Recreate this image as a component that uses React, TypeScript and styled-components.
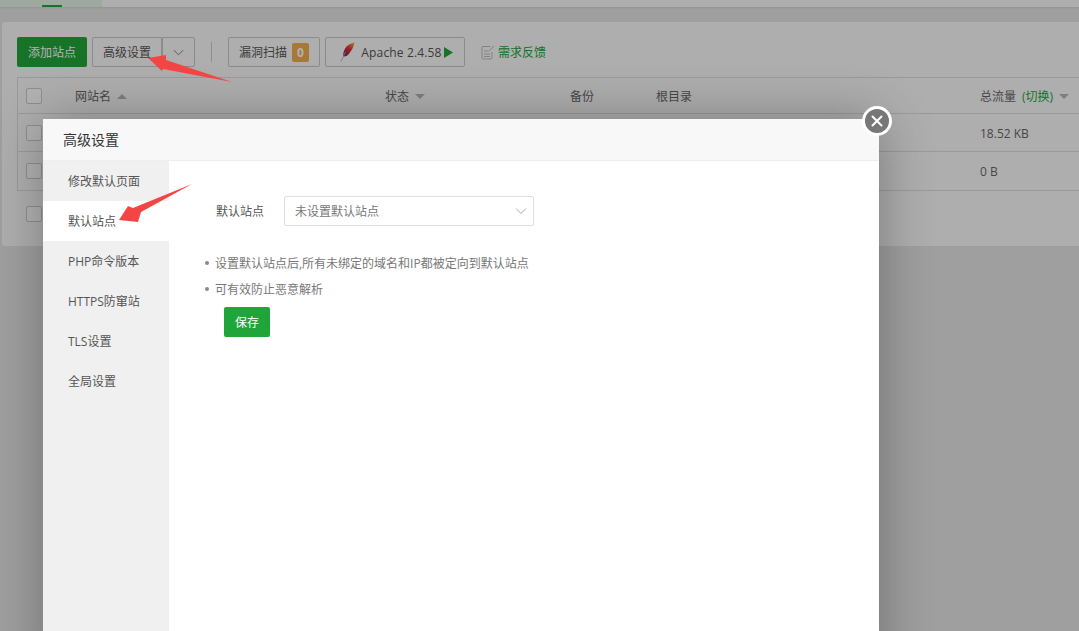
import React from "react";
import styled, { createGlobalStyle } from "styled-components";

const Global = createGlobalStyle`
  html, body { margin: 0; padding: 0; background: #e4e4e4; }
  body { font-family: "Open Sans", "Noto Sans CJK SC", sans-serif; font-size: 12px; color: #666; }
  * { box-sizing: border-box; }
`;

const Viewport = styled.div`
  position: relative;
  width: 1079px;
  height: 631px;
  overflow: hidden;
  background: #e4e4e4;
`;
const TopCard = styled.div`
  height: 7px;
  background: #fafafa;
  box-shadow: 0 1px 2px rgba(0, 0, 0, 0.08);
  margin-bottom: 15px;
`;
const TopTab = styled.div`
  display: flow-root;
  width: 102px;
  height: 7px;
  background: #e3f3e6;
  padding-left: 42px;
`;
const TopMark = styled.div`
  width: 20px;
  height: 2px;
  margin-top: 5px;
  background: #20a53a;
`;
const Panel = styled.section`
  margin-left: 2px;
  height: 224px;
  background: #fafafa;
  border-radius: 4px 0 0 4px;
  padding: 15px 0 0 15px;
`;
const Toolbar = styled.div`
  display: flex;
  align-items: center;
  height: 30px;
`;
const PrimaryBtn = styled.div`
  width: 70px;
  height: 30px;
  display: flex;
  align-items: center;
  justify-content: center;
  background: #20a53a;
  color: #fff;
  border-radius: 2px;
`;
const OutlineBtn = styled.div<{ $w: number; $ml?: number; $radius?: string; $pl?: number }>`
  width: ${(p) => p.$w}px;
  margin-left: ${(p) => p.$ml ?? 0}px;
  height: 30px;
  padding-left: ${(p) => p.$pl ?? 0}px;
  display: flex;
  align-items: center;
  justify-content: center;
  gap: 5px;
  background: transparent;
  color: #555;
  border: 1px solid #c8c8c8;
  border-radius: ${(p) => p.$radius ?? "2px"};
`;
const ApacheLabel = styled.span`
  letter-spacing: 0.15px;
  margin-left: 1px;
`;
const Divider = styled.div`
  width: 1px;
  height: 20px;
  margin: 0 16px;
  background: #ccc;
`;
const Badge = styled.span`
  width: 17px;
  height: 19px;
  display: flex;
  align-items: center;
  justify-content: center;
  background: #f0ad4e;
  color: #fff;
  font-size: 12px;
  font-weight: 700;
  border-radius: 2px;
`;
const Feedback = styled.div`
  margin-left: 16px;
  display: flex;
  align-items: center;
  gap: 3px;
  color: #20a53a;
`;
const Table = styled.div`
  margin-top: 10px;
  border: 1px solid #ddd;
  border-right: 0;
`;
const Row = styled.div<{ $h: number; $bg?: string; $line?: boolean; $pt?: number }>`
  display: grid;
  grid-template-columns: 49px 310px 185px 86px 324px 1fr;
  align-items: center;
  height: ${(p) => p.$h}px;
  padding: ${(p) => p.$pt ?? 0}px 0 0 8px;
  background: ${(p) => p.$bg ?? "transparent"};
  border-bottom: ${(p) => (p.$line ? "1px solid #ddd" : "0")};
  color: #666;
`;
const Head = styled.div`
  display: flex;
  align-items: center;
  gap: 6px;
  color: #666;
`;
const Caret = styled.span<{ $up?: boolean }>`
  width: 0;
  height: 0;
  border-left: 5px solid transparent;
  border-right: 5px solid transparent;
  ${(p) => (p.$up ? "border-bottom: 5px solid #b5b5b5;" : "border-top: 5px solid #b5b5b5;")}
`;
const Check = styled.div`
  width: 16px;
  height: 16px;
  border: 1px solid #ccc;
  border-radius: 2px;
  background: #fff;
`;
const Green = styled.span`
  color: #20a53a;
`;
const Footer = styled.div`
  padding: 15px 0 0 9px;
`;
const Shade = styled.div`
  position: absolute;
  inset: 0;
  background: rgba(0, 0, 0, 0.3);
`;
const Dialog = styled.div`
  position: absolute;
  left: 43px;
  top: 119px;
  width: 836px;
  height: 560px;
  background: #fff;
  box-shadow: 1px 1px 50px rgba(0, 0, 0, 0.3);
`;
const DialogTitle = styled.div`
  height: 42px;
  padding: 0 0 2px 20px;
  display: flex;
  align-items: center;
  background: #f8f8f8;
  border-bottom: 1px solid #eee;
  color: #333;
  font-size: 14px;
`;
const DialogBody = styled.div`
  display: flex;
  height: 518px;
`;
const Side = styled.nav`
  width: 126px;
  background: #f0f0f0;
`;
const SideItem = styled.div<{ $active?: boolean }>`
  height: 40px;
  padding-left: 25px;
  display: flex;
  align-items: center;
  color: #555;
  background: ${(p) => (p.$active ? "#fff" : "transparent")};
`;
const Content = styled.div`
  flex: 1;
  padding: 35px 0 0 35px;
`;
const FormRow = styled.div`
  display: flex;
  align-items: center;
  padding-left: 12px;
`;
const FormLabel = styled.label`
  width: 68px;
  color: #555;
`;
const SelectBox = styled.div`
  width: 250px;
  height: 30px;
  padding: 0 6px 0 10px;
  display: flex;
  align-items: center;
  justify-content: space-between;
  border: 1px solid #dcdfe6;
  border-radius: 2px;
  color: #777;
`;
const Notes = styled.ul`
  list-style: none;
  margin: 24px 0 0;
  padding: 0;
`;
const Note = styled.li`
  height: 26px;
  display: flex;
  align-items: center;
  gap: 6px;
  color: #777;
  &::before {
    content: "";
    width: 4px;
    height: 4px;
    margin-left: 1px;
    border-radius: 50%;
    background: #888;
  }
`;
const SaveBtn = styled.div`
  margin: 5px 0 0 20px;
  width: 46px;
  height: 30px;
  display: flex;
  align-items: center;
  justify-content: center;
  background: #20a53a;
  color: #fff;
  border-radius: 2px;
`;
const CloseBtn = styled.div`
  position: absolute;
  left: 862px;
  top: 106px;
  width: 30px;
  height: 30px;
  border-radius: 50%;
  border: 3px solid #fff;
  background: #777;
  display: flex;
  align-items: center;
  justify-content: center;
`;
const ArrowLayer = styled.svg`
  position: absolute;
  left: 0;
  top: 0;
  pointer-events: none;
`;

const Feather = () => (
  <svg width="15" height="20" viewBox="0 0 15 20">
    <defs>
      <linearGradient id="fg" x1="0.8" y1="0" x2="0.2" y2="1">
        <stop offset="0" stopColor="#f6a13a" />
        <stop offset="0.45" stopColor="#d8352f" />
        <stop offset="1" stopColor="#7d1f6e" />
      </linearGradient>
    </defs>
    <path d="M14.500 0.500C11 1 7 3 4.800 7 3.500 9.500 3 12 3.300 14.500 6 14.800 8.500 13 10 10.500 12 7.500 14 4.500 14.500 0.500Z" fill="url(#fg)" />
    <path d="M5.500 10 1 19.500" stroke="#b9a6c4" strokeWidth="0.8" fill="none" />
  </svg>
);

const NoteIcon = () => (
  <svg width="14" height="15" viewBox="0 0 14 15" fill="none" stroke="#bbb" strokeWidth="1">
    <path d="M9.500 1.500H2a1 1 0 0 0-1 1v10.500a1 1 0 0 0 1 1h8a1 1 0 0 0 1-1V7" />
    <path d="M3 6h4M3 9h6M3 11.500h6" />
    <path d="M7.500 6.500 13 1" />
  </svg>
);

const Chevron = ({ color, w }: { color: string; w: number }) => (
  <svg width={w} height={w} viewBox="0 0 12 12" fill="none" stroke={color} strokeWidth="1">
    <path d="M1 3.500 6 8.500 11 3.500" />
  </svg>
);

const App = () => (
  <Viewport>
    <Global />
    <TopCard>
      <TopTab>
        <TopMark />
      </TopTab>
    </TopCard>
    <Panel>
      <Toolbar>
        <PrimaryBtn>添加站点</PrimaryBtn>
        <OutlineBtn $w={70} $ml={5} $radius="2px 0 0 2px">高级设置</OutlineBtn>
        <OutlineBtn $w={33} $radius="0 2px 2px 0">
          <Chevron color="#777" w={11} />
        </OutlineBtn>
        <Divider />
        <OutlineBtn $w={92}>
          漏洞扫描<Badge>0</Badge>
        </OutlineBtn>
        <OutlineBtn $w={140} $ml={5} $pl={3}>
          <Feather />
          <ApacheLabel>Apache 2.4.58</ApacheLabel>
          <svg width="9" height="11" viewBox="0 0 9 11" style={{ marginLeft: -3 }}>
            <path d="M0 0 9 5.500 0 11Z" fill="#20a53a" />
          </svg>
        </OutlineBtn>
        <Feedback>
          <NoteIcon />
          需求反馈
        </Feedback>
      </Toolbar>
      <Table>
        <Row $h={36} $pt={1} $line>
          <Check />
          <Head>网站名<Caret $up /></Head>
          <Head>状态<Caret /></Head>
          <Head>备份</Head>
          <Head>根目录</Head>
          <Head>总流量 <Green>(切换)</Green><Caret /></Head>
        </Row>
        <Row $h={38} $pt={1} $line>
          <Check /><span /><span /><span /><span /><span>18.52 KB</span>
        </Row>
        <Row $h={38}>
          <Check /><span /><span /><span /><span /><span>0 B</span>
        </Row>
      </Table>
      <Footer>
        <Check />
      </Footer>
    </Panel>
    <Shade />
    <Dialog>
      <DialogTitle>高级设置</DialogTitle>
      <DialogBody>
        <Side>
          <SideItem>修改默认页面</SideItem>
          <SideItem $active>默认站点</SideItem>
          <SideItem>PHP命令版本</SideItem>
          <SideItem>HTTPS防窜站</SideItem>
          <SideItem>TLS设置</SideItem>
          <SideItem>全局设置</SideItem>
        </Side>
        <Content>
          <FormRow>
            <FormLabel>默认站点</FormLabel>
            <SelectBox>
              未设置默认站点
              <Chevron color="#aaa" w={12} />
            </SelectBox>
          </FormRow>
          <Notes>
            <Note>设置默认站点后,所有未绑定的域名和IP都被定向到默认站点</Note>
            <Note>可有效防止恶意解析</Note>
          </Notes>
          <SaveBtn>保存</SaveBtn>
        </Content>
      </DialogBody>
    </Dialog>
    <CloseBtn>
      <svg width="12" height="12" viewBox="0 0 12 12" stroke="#fff" strokeWidth="2" strokeLinecap="round">
        <path d="M1.500 1.500 10.500 10.500M10.500 1.500 1.500 10.500" />
      </svg>
    </CloseBtn>
    <ArrowLayer width="1079" height="631" viewBox="0 0 1079 631">
      <path d="M148 58 166 55 166 60 232 82 163 69 162 71Z" fill="#f44545" />
      <path d="M119 220 128 206 133 208 192 184 141 212 138 222Z" fill="#f44545" />
    </ArrowLayer>
  </Viewport>
);

export default App;
